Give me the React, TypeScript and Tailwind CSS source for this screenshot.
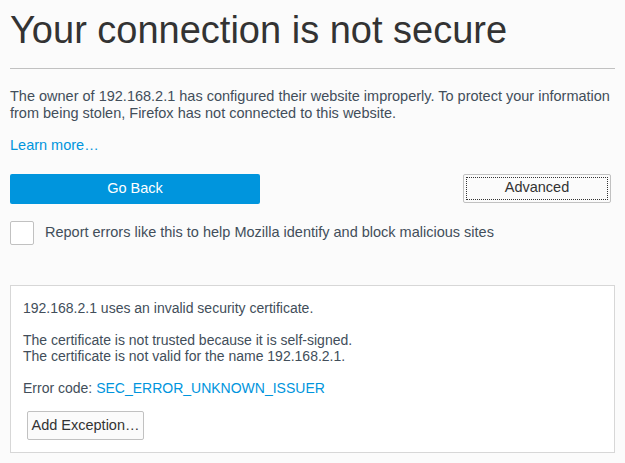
export default function App() {
  return (
    <div className="min-h-screen bg-[#fbfbfb] font-['Liberation_Sans',Arial,sans-serif] text-[#424e5a]">
      <div className="w-[605px] ml-[10px] pt-[11px]">
        <h1 className="text-[38px] leading-[38px] text-[#333] font-normal">
          Your connection is not secure
        </h1>
        <div className="mt-[19px] border-t border-[#c1c1c1]" />

        <p className="mt-[19px] text-[14.5px] leading-[16.6px]">
          The owner of 192.168.2.1 has configured their website improperly. To
          protect your information from being stolen, Firefox has not connected
          to this website.
        </p>
        <p className="mt-[16px] text-[14.5px] leading-[16.6px]">
          <a href="#" className="text-[#0095dd]">
            Learn more…
          </a>
        </p>

        <div className="mt-[20px] flex items-start justify-between">
          <button className="w-[250px] h-[30px] rounded-[2px] bg-[#0095dd] text-white text-[14.5px]">
            Go Back
          </button>
          <button className="mr-[4px] w-[148px] h-[29px] rounded-[2px] border border-[#c1c1c1] bg-[#fbfbfb] p-[2px] text-[14.5px] text-[#333]">
            <span className="flex h-full w-full items-center justify-center border border-dotted border-[#333]">
              Advanced
            </span>
          </button>
        </div>

        <label className="mt-[17px] flex items-center gap-[11px] text-[14.5px]">
          <span className="block w-[24px] h-[24px] rounded-[2px] border border-[#c1c1c1] bg-white" />
          <span>Report errors like this to help Mozilla identify and block malicious sites</span>
        </label>

        <div className="mt-[40px] border border-[#d7d7d7] bg-white pt-[14px] pb-[12px] pl-[12px] pr-[12px] text-[14px] leading-[16px]">
          <p>192.168.2.1 uses an invalid security certificate.</p>
          <p className="mt-[16px]">The certificate is not trusted because it is self-signed.</p>
          <p>The certificate is not valid for the name 192.168.2.1.</p>
          <p className="mt-[16px]">
            Error code: <a href="#" className="text-[#0095dd]">SEC_ERROR_UNKNOWN_ISSUER</a>
          </p>
          <button className="mt-[15px] ml-[4px] w-[117px] h-[29px] rounded-[2px] border border-[#c1c1c1] bg-[#fbfbfb] text-[14.5px] text-[#333]">
            Add Exception…
          </button>
        </div>
      </div>
    </div>
  );
}
